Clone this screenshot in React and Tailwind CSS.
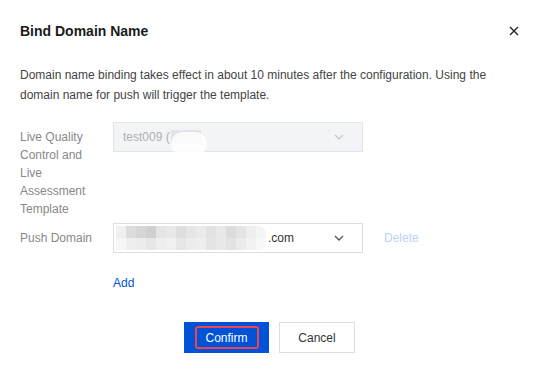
import React from "react";

const row1 = ["#f0f0f0","#dcdcdc","#d6d6d6","#d0d0d0","#e4e4e4","#e8e8e8","#dedede","#e6e6e6","#eaeaea","#e2e2e2","#e8e8e8","#dcdcdc","#e4e4e4","#eeeeee","#f4f4f4"];
const row2 = ["#f6f6f6","#eeeeee","#ececec","#e6e6e6","#eeeeee","#f0f0f0","#e6e6e6","#ececec","#eeeeee","#e4e4e4","#e8e8e8","#e2e2e2","#ebebeb","#f2f2f2","#f8f8f8"];

function Chevron({ color }) {
  return (
    <svg width="10" height="6" viewBox="0 0 10 6" fill="none">
      <path d="M1 1L5 5L9 1" stroke={color} strokeWidth="1.3" />
    </svg>
  );
}

export default function App() {
  return (
    <div className="w-[538px] h-[372px] bg-white font-['Liberation_Sans',Arial,sans-serif] overflow-hidden">
      <div className="flex items-center justify-between pl-5 pr-[18px] pt-5">
        <div className="text-[14px] leading-[22px] font-bold text-[#1a1a1a]">Bind Domain Name</div>
        <svg width="10" height="10" viewBox="0 0 10 10" className="mr-[1px]">
          <path d="M1 1L9 9M9 1L1 9" stroke="#222" strokeWidth="1.4" />
        </svg>
      </div>

      <div className="px-5 mt-[23px] text-[12px] leading-5 text-[#444]">
        Domain name binding takes effect in about 10 minutes after the configuration. Using the domain name for push will trigger the template.
      </div>

      <div className="px-5 mt-[17px]">
        <div className="flex">
          <div className="w-[93px] pr-3 pt-[6px] text-[12px] leading-[18px] text-[#888]">
            Live Quality Control and Live Assessment Template
          </div>
          <div className="w-[250px] h-[30px] border border-[#e3e5ea] bg-[#f3f4f7] flex items-center justify-between pl-[9px] pr-[18px]">
            <div className="flex items-center text-[12px] text-[#b0b0b0] relative">
              <span>test009 (</span>
              <span className="w-[30px] h-[14px] bg-[#e3e3e6] ml-[1px]"></span>
              <span className="absolute left-[48px] top-[4px] w-[36px] h-[24px] rounded-full bg-white opacity-80"></span>
            </div>
            <Chevron color="#c8c8c8" />
          </div>
        </div>

        <div className="flex items-center mt-[5px]">
          <div className="w-[93px] text-[12px] leading-[18px] text-[#888]">Push Domain</div>
          <div className="w-[250px] h-[30px] border border-[#dcdfe6] bg-white flex items-center justify-between pl-[2px] pr-[18px]">
            <div className="flex items-center">
              <div className="w-[152px] h-[26px] rounded-r-full overflow-hidden flex flex-col justify-center">
                <div className="flex h-[12px]">
                  {row1.map((c, i) => (
                    <div key={i} className="w-[10px] h-full" style={{ background: c }} />
                  ))}
                </div>
                <div className="flex h-[12px]">
                  {row2.map((c, i) => (
                    <div key={i} className="w-[10px] h-full" style={{ background: c }} />
                  ))}
                </div>
              </div>
              <span className="text-[12px] text-[#333]">.com</span>
            </div>
            <Chevron color="#555" />
          </div>
          <div className="ml-[21px] text-[12px] text-[#bcd2fa]">Delete</div>
        </div>

        <div className="ml-[93px] mt-[21px] text-[12px] leading-[18px] text-[#0052d9]">Add</div>
      </div>

      <div className="flex justify-center gap-[10px] mt-[30px] pl-[1px]">
        <div className="w-[85px] h-[31px] bg-[#0052d9] flex items-center justify-center">
          <div className="w-[64px] h-[23px] border-2 border-[#f0434b] rounded-[3px] flex items-center justify-center text-[12px] text-white">
            Confirm
          </div>
        </div>
        <div className="w-[76px] h-[31px] border border-[#dcdfe6] bg-white flex items-center justify-center text-[12px] text-[#333]">
          Cancel
        </div>
      </div>
    </div>
  );
}
